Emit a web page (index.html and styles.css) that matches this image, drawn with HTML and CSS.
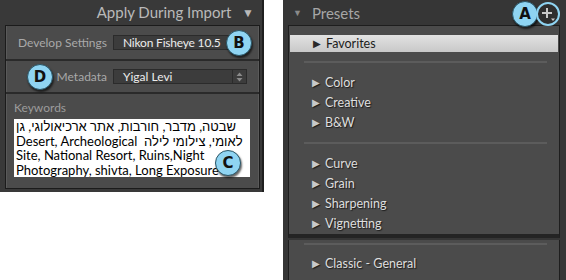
FILE: index.html
```html
<!DOCTYPE html>
<html lang="en">
<head>
  <meta charset="UTF-8">
  <title>Import Panels</title>
  <link rel="stylesheet" href="styles.css">
</head>
<body>
  <div class="page">
    <!-- Apply During Import panel -->
    <div class="import-panel">
      <div class="panel-title">Apply During Import <span class="title-arrow">&#9660;</span></div>
      <div class="import-box">
        <div class="field-row develop-row">
          <span class="field-label">Develop Settings</span>
          <div class="field-value">Nikon Fisheye 10.5</div>
        </div>
        <div class="field-row metadata-row">
          <span class="field-label">Metadata</span>
          <div class="field-value select">
            <span>Yigal Levi</span>
            <span class="spinner">
              <svg width="7" height="10" viewBox="0 0 7 10"><path d="M3.5 0.5 L6.5 4 L0.5 4 Z M3.5 9.5 L6.5 6 L0.5 6 Z" fill="#8a8a8a"/></svg>
            </span>
          </div>
        </div>
        <div class="keywords">
          <div class="keywords-label">Keywords</div>
          <div class="keywords-text">
            <div>שבטה, מדבר, חורבות, אתר ארכיאולוגי, גן</div>
            <div>Desert, Archeological&nbsp; לאומי, צילומי לילה</div>
            <div>Site, National Resort, Ruins,Night</div>
            <div>Photography, shivta, Long Exposure</div>
          </div>
        </div>
      </div>
      <span class="badge badge-b">B</span>
      <span class="badge badge-d">D</span>
      <span class="badge badge-c">C</span>
    </div>

    <!-- Presets panel -->
    <div class="presets-panel">
      <div class="presets-header">
        <span class="header-arrow">&#9660;</span>
        <span class="presets-title">Presets</span>
      </div>
      <div class="presets-list">
        <div class="preset-item selected"><span class="tri">&#9654;</span>Favorites</div>
        <div class="separator"></div>
        <div class="preset-item"><span class="tri">&#9654;</span>Color</div>
        <div class="preset-item"><span class="tri">&#9654;</span>Creative</div>
        <div class="preset-item"><span class="tri">&#9654;</span>B&amp;W</div>
        <div class="separator"></div>
        <div class="preset-item"><span class="tri">&#9654;</span>Curve</div>
        <div class="preset-item"><span class="tri">&#9654;</span>Grain</div>
        <div class="preset-item"><span class="tri">&#9654;</span>Sharpening</div>
        <div class="preset-item"><span class="tri">&#9654;</span>Vignetting</div>
      </div>
      <div class="presets-more">
        <div class="separator"></div>
        <div class="preset-item"><span class="tri">&#9654;</span>Classic - General</div>
      </div>
      <span class="badge badge-a">A</span>
      <span class="add-button">
        <svg width="18" height="18" viewBox="0 0 18 18">
          <path d="M8 3 V13 M3 8 H13" stroke="#c8c8c8" stroke-width="2"/>
          <path d="M12 13.5 H16 L14 16 Z" fill="#c8c8c8"/>
        </svg>
      </span>
    </div>
  </div>
</body>
</html>
```

FILE: styles.css
```css
body {
  margin: 0;
  padding: 0;
  background: #ffffff;
  font-family: Lato, "Liberation Sans", sans-serif;
}

.page {
  display: flex;
  align-items: flex-start;
  gap: 19px;
  width: 566px;
  height: 280px;
  overflow: hidden;
}

/* Left panel */
.import-panel {
  position: relative;
  width: 264px;
  height: 192px;
  background: #393939;
  border-right: 2px solid #1f1f1f;
  box-sizing: border-box;
  display: flex;
  flex-direction: column;
  flex-shrink: 0;
}

.panel-title {
  height: 25px;
  line-height: 25px;
  text-align: right;
  padding-right: 8px;
  font-size: 15px;
  color: #b9b9b9;
}

.title-arrow {
  font-size: 12px;
  margin-left: 7px;
  position: relative;
  top: -1px;
}

.import-box {
  margin: 0 2px 0 5px;
  height: 162px;
  background: #2a2a2a;
  border: 1px solid #1b1b1b;
  display: flex;
  flex-direction: column;
  gap: 2px;
}

.field-row {
  display: flex;
  align-items: center;
  background: #4b4b4b;
  border-left: 1px solid #5a5a5a;
  border-right: 1px solid #5a5a5a;
  padding-left: 106px;
  box-sizing: border-box;
  gap: 6px;
}

.develop-row {
  height: 33px;
}

.metadata-row {
  height: 31px;
}

.field-label {
  font-size: 12px;
  color: #a9a9a9;
  margin-left: -200px;
  width: 194px;
  text-align: right;
}

.field-value {
  height: 15px;
  line-height: 14px;
  box-sizing: border-box;
  background: #3c3c3c;
  border: 1px solid #2b2b2b;
  color: #ececec;
  font-size: 12px;
  letter-spacing: -0.2px;
  padding-left: 9px;
  width: 123px;
}

.field-value.select {
  width: 134px;
  display: flex;
  justify-content: space-between;
  padding-right: 0;
  letter-spacing: 0;
}

.spinner {
  width: 13px;
  border-left: 1px solid #2b2b2b;
  display: flex;
  align-items: center;
  justify-content: center;
}

.keywords {
  flex-grow: 1;
  background: #4b4b4b;
  border-left: 1px solid #5a5a5a;
  border-right: 1px solid #5a5a5a;
  padding: 6px 6px 0 7px;
}

.keywords-label {
  font-size: 12px;
  color: #9c9c9c;
  height: 19px;
}

.keywords-text {
  background: #ffffff;
  height: 58px;
  padding: 0 3px 0 2px;
  font-size: 13px;
  line-height: 14.5px;
  color: #000000;
  margin-right: 2px;
}

/* Callout badges */
.badge {
  position: absolute;
  width: 24px;
  height: 24px;
  border-radius: 50%;
  background: #8fd4f2;
  border: 1px solid #2a5566;
  box-shadow: 1px 2px 2px rgba(0, 0, 0, 0.6);
  color: #111111;
  font-family: "DejaVu Sans", sans-serif;
  font-weight: bold;
  font-size: 15px;
  line-height: 24px;
  text-align: center;
}

.badge-b { left: 226px; top: 30px; }
.badge-d { left: 27px; top: 64px; }
.badge-c { left: 215px; top: 150px; }
.badge-a { left: 229px; top: 1px; }

/* Right panel */
.presets-panel {
  position: relative;
  width: 283px;
  height: 280px;
  background: #363636;
  display: flex;
  flex-direction: column;
  flex-shrink: 0;
}

.presets-header {
  height: 25px;
  display: flex;
  align-items: center;
  padding-left: 10px;
  gap: 10px;
}

.header-arrow {
  font-size: 9px;
  color: #8a8a8a;
}

.presets-title {
  font-size: 15px;
  color: #a6a6a6;
}

.presets-list {
  margin: 0 6px 0 5px;
  background: #4b4b4b;
  border: 1px solid #1e1e1e;
  border-bottom: 4px solid #242424;
  padding-top: 9px;
}

.preset-item {
  height: 20px;
  line-height: 20px;
  padding-left: 23px;
  font-size: 12.5px;
  color: #dedede;
  text-shadow: 1px 1px 1px #1c1c1c;
}

.preset-item .tri {
  font-size: 9.5px;
  color: #c9c9c9;
  margin-right: 5px;
  position: relative;
  top: -1px;
}

.preset-item.selected {
  height: 17px;
  line-height: 17px;
  margin: 0 1px;
  background: linear-gradient(#e2e2e2, #c8c8c8);
  color: #1c1c1c;
  text-shadow: none;
}

.preset-item.selected .tri {
  color: #2a2a2a;
}

.separator {
  height: 2px;
  background: #5c5c5c;
  margin: 9px 12px 10px 15px;
}

.presets-more {
  margin: 2px 6px 0 5px;
  flex-grow: 1;
  background: #4b4b4b;
  border-left: 1px solid #1e1e1e;
  border-right: 1px solid #1e1e1e;
  padding-top: 1px;
}

.presets-more .separator {
  margin-top: 2px;
  margin-bottom: 9px;
}

.add-button {
  position: absolute;
  left: 253px;
  top: 2px;
  width: 20px;
  height: 20px;
  border-radius: 50%;
  border: 2px solid #8fd4f2;
  background: #2e2e2e;
  display: flex;
  align-items: center;
  justify-content: center;
}
```
